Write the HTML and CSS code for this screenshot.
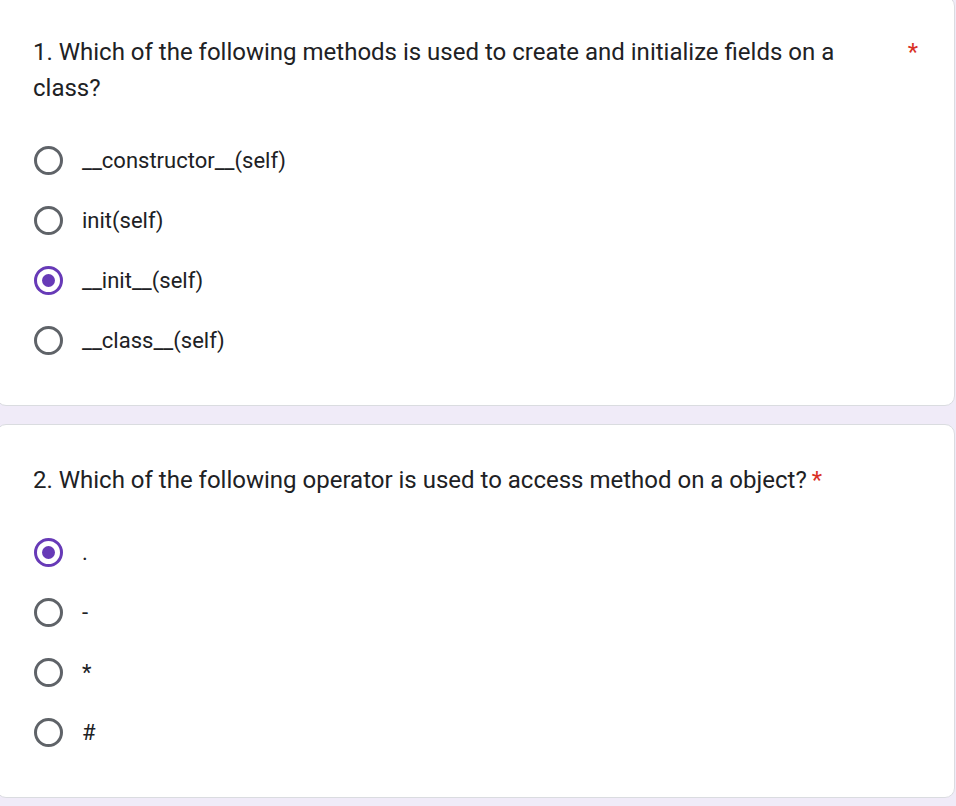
FILE: index.html
```html
<!DOCTYPE html>
<html lang="en">
<head>
<meta charset="utf-8">
<title>Quiz</title>
<link rel="stylesheet" href="styles.css">
</head>
<body>
<main class="form">
  <section class="card card--first">
    <div class="q-title">
      <span class="q-text q-text--fill">1. Which of the following methods is used to create and initialize fields on a class?</span>
      <span class="req">*</span>
    </div>
    <div class="options">
      <label class="option"><span class="radio"></span><span class="opt-text">__constructor__(self)</span></label>
      <label class="option"><span class="radio"></span><span class="opt-text">init(self)</span></label>
      <label class="option"><span class="radio radio--on"></span><span class="opt-text">__init__(self)</span></label>
      <label class="option"><span class="radio"></span><span class="opt-text">__class__(self)</span></label>
    </div>
  </section>
  <section class="card">
    <div class="q-title">
      <span class="q-text">2. Which of the following operator is used to access method on a object?</span>
      <span class="req">*</span>
    </div>
    <div class="options">
      <label class="option"><span class="radio radio--on"></span><span class="opt-text">.</span></label>
      <label class="option"><span class="radio"></span><span class="opt-text">-</span></label>
      <label class="option"><span class="radio"></span><span class="opt-text">*</span></label>
      <label class="option"><span class="radio"></span><span class="opt-text">#</span></label>
    </div>
  </section>
</main>
</body>
</html>
```

FILE: styles.css
```css
* { box-sizing: border-box; }
html, body {
  margin: 0;
  padding: 0;
  background: #f0ebf8;
  font-family: Roboto, "Liberation Sans", Arial, sans-serif;
  color: #202124;
}
body { overflow: hidden; }
.form {
  display: flex;
  flex-direction: column;
  gap: 18px;
  margin-left: -4px;
  width: 959px;
  margin-top: -4px;
}
.card {
  background: #fff;
  border: 1px solid #dadce0;
  border-radius: 10px;
  padding: 37px 36px 35px 36px;
}
.q-title {
  display: flex;
  align-items: flex-start;
  font-size: 24px;
  line-height: 36px;
  color: #202124;
}
.q-text { flex: 0 1 auto; }
.q-text--fill { flex: 1 1 auto; padding-right: 30px; }
.req {
  color: #d93025;
  margin-left: 5px;
  flex: none;
}
.options {
  display: flex;
  flex-direction: column;
  margin-top: 24px;
}
.option {
  display: flex;
  align-items: center;
  height: 60px;
  gap: 19px;
  padding-left: 1px;
}
.radio {
  width: 29px;
  height: 29px;
  border: 3px solid #5f6368;
  border-radius: 50%;
  flex: none;
  display: flex;
  align-items: center;
  justify-content: center;
}
.radio--on { border-color: #673ab7; }
.radio--on::after {
  content: "";
  width: 13px;
  height: 13px;
  border-radius: 50%;
  background: #673ab7;
}
.opt-text {
  font-size: 22px;
  color: #202124;
}
```
